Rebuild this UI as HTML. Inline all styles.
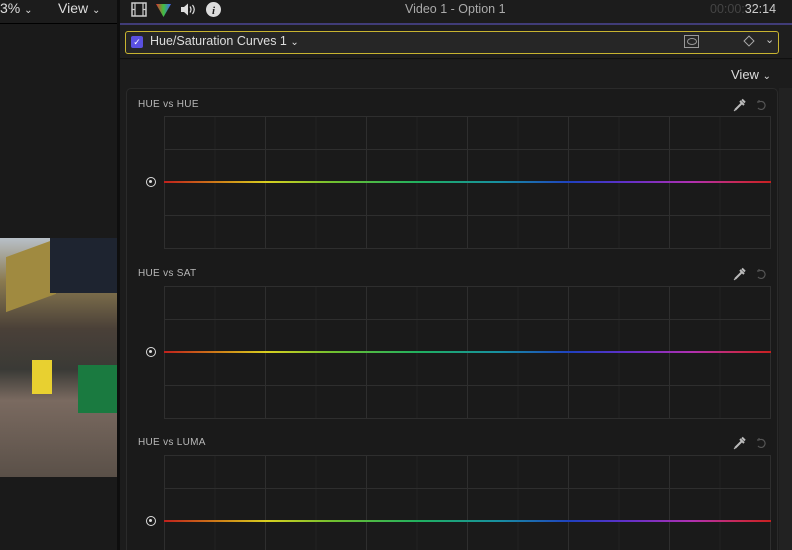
<!DOCTYPE html>
<html><head><style>
*{margin:0;padding:0;box-sizing:border-box}
html,body{width:792px;height:550px;overflow:hidden}
body{background:#1a1a1a;position:relative;font-family:"Liberation Sans",sans-serif;color:#ccc}
#wrap{position:absolute;left:0;top:0;width:792px;height:550px;overflow:hidden}
.abs{position:absolute}
.lbl{position:absolute;left:138px;font-size:10px;color:#b8b8b8;letter-spacing:.3px}
.grid{position:absolute;left:164px;width:607px;height:133px;border:1px solid #2e2e2e;
background-image:linear-gradient(90deg,#2e2e2e 1px,transparent 1px),linear-gradient(#2e2e2e 1px,transparent 1px),linear-gradient(90deg,#222 1px,transparent 1px);
background-size:101px 100%,100% 33px,50.5px 100%;background-position:-1px 0,0 -1px,-1px 0}
.line{position:absolute;left:164px;width:607px;height:2px;background:linear-gradient(90deg,#c0201c 0%,#d08a18 10%,#d8d020 17%,#70c030 28%,#20b060 42%,#1890a0 55%,#2040c0 67%,#6030c8 76%,#b030b0 87%,#c82850 95%,#c82020 100%)}
.dot{position:absolute;left:146px;width:10px;height:10px;border:1.5px solid #ddd;border-radius:50%}
.dot:after{content:"";position:absolute;left:2px;top:2px;width:3px;height:3px;background:#ddd;border-radius:50%}
</style></head><body><div id="wrap">
<div class="abs" style="left:0;top:0;width:118px;height:24px;background:#1c1c1c;border-bottom:1px solid #000"></div>
<div class="abs" style="left:0;top:0;font-size:14px;color:#ddd">3% <span style="font-size:10px">⌄</span></div>
<div class="abs" style="left:58px;top:0;font-size:14px;color:#ddd">View <span style="font-size:10px">⌄</span></div>
<div class="abs" style="left:0;top:238px;width:117px;height:239px;background:linear-gradient(180deg,#b8c0c8 0%,#8a7a50 18%,#4a4038 38%,#3a3a36 55%,#7a6a60 68%,#5a5048 100%)"></div>
<div class="abs" style="left:6px;top:248px;width:50px;height:55px;background:#a08a40;transform:skewY(-20deg)"></div>
<div class="abs" style="left:50px;top:238px;width:67px;height:55px;background:#1e2430"></div>
<div class="abs" style="left:32px;top:360px;width:20px;height:34px;background:#e8d030"></div>
<div class="abs" style="left:78px;top:365px;width:39px;height:48px;background:#1a7a40"></div>
<div class="abs" style="left:117px;top:0;width:3px;height:550px;background:#0e0e0e"></div>
<div class="abs" style="left:120px;top:0;width:672px;height:24px;background:#1c1c1c"></div>
<div class="abs" style="left:120px;top:23px;width:672px;height:2px;background:#403c78"></div>
<svg class="abs" style="left:130px;top:1px" width="95" height="18" viewBox="0 0 95 18">
<rect x="2" y="2" width="14" height="13" fill="none" stroke="#ccc" stroke-width="1.5"/>
<path d="M5 2v13M13 2v13M2 8.5h3M13 8.5h3" stroke="#ccc" stroke-width="1.2"/>
<defs><linearGradient id="g" x1="0" x2="1"><stop offset="0" stop-color="#e03030"/><stop offset=".5" stop-color="#40c040"/><stop offset="1" stop-color="#4060ff"/></linearGradient></defs>
<path d="M26 3h15l-7.5 13z" fill="url(#g)"/>
<path d="M51 6h3l4-3.5v12L54 11h-3z" fill="#ddd"/><path d="M60 5.5q2 3 0 6M62.5 4q3.5 4.5 0 9" stroke="#ddd" fill="none" stroke-width="1.2"/>
<circle cx="83.5" cy="8.5" r="7.5" fill="#ddd"/><text x="83.5" y="13" font-family="Liberation Serif" font-style="italic" font-weight="bold" font-size="11" fill="#1c1c1c" text-anchor="middle">i</text>
</svg>
<div class="abs" style="left:405px;top:2px;font-size:12.5px;color:#aaa">Video 1 - Option 1</div>
<div class="abs" style="left:710px;top:2px;font-size:12.5px;color:#444">00:00:<span style="color:#ccc">32:14</span></div>
<div class="abs" style="left:120px;top:25px;width:672px;height:34px;background:#1e1e1e;border-bottom:1px solid #101010"></div>
<div class="abs" style="left:125px;top:31px;width:654px;height:23px;border:1.5px solid #c8b430;border-radius:3px;background:#262626"></div>
<div class="abs" style="left:131px;top:36px;width:12px;height:12px;background:#5a50e0;border-radius:2px;color:#fff;font-size:9px;text-align:center;line-height:12px">✓</div>
<div class="abs" style="left:150px;top:34px;font-size:12.5px;color:#ddd">Hue/Saturation Curves 1 <span style="font-size:10px">⌄</span></div>
<div class="abs" style="left:684px;top:35px;width:15px;height:13px;border:1px solid #999"><div style="margin:2px auto;width:10px;height:7px;border:1px solid #999;border-radius:50%"></div></div>
<div class="abs" style="left:745px;top:37px;width:8px;height:8px;border:1.5px solid #aaa;transform:rotate(45deg)"></div>
<div class="abs" style="left:765px;top:33px;font-size:11px;color:#ccc">⌄</div>
<div class="abs" style="left:120px;top:60px;width:672px;height:490px;background:#1c1c1c"></div>
<div class="abs" style="left:731px;top:67px;font-size:13px;color:#ddd">View <span style="font-size:10px">⌄</span></div>
<div class="abs" style="left:126px;top:88px;width:652px;height:462px;background:#1a1a1a;border:1px solid #2a2a2a;border-bottom:none;border-radius:5px 5px 0 0"></div>
<div class="abs" style="left:779px;top:88px;width:13px;height:462px;background:#222"></div>

<div class="lbl" style="top:99px">HUE vs HUE</div>
<div class="grid" style="top:116px"></div>
<div class="line" style="top:181px"></div><div class="dot" style="top:177px"></div>

<div class="lbl" style="top:268px">HUE vs SAT</div>
<div class="grid" style="top:286px"></div>
<div class="line" style="top:351px"></div><div class="dot" style="top:347px"></div>

<div class="lbl" style="top:437px">HUE vs LUMA</div>
<div class="grid" style="top:455px;height:95px;border-bottom:none"></div>
<div class="line" style="top:520px"></div><div class="dot" style="top:516px"></div>

<svg class="abs" style="left:732px;top:97px" width="40" height="360">
<g id="ic"><path d="M3 13l7-7M8 4l4 4M10 2.5l3 3" stroke="#bbb" stroke-width="2" fill="none"/><path d="M3 13l-1 1" stroke="#bbb" stroke-width="1"/>
<path d="M27 5a4 4 0 1 1 -1 6M27 5l-2 0M27 5l0 -2" stroke="#555" stroke-width="1.2" fill="none"/></g>
<use href="#ic" y="169"/><use href="#ic" y="338"/>
</svg>
</div></body></html>
